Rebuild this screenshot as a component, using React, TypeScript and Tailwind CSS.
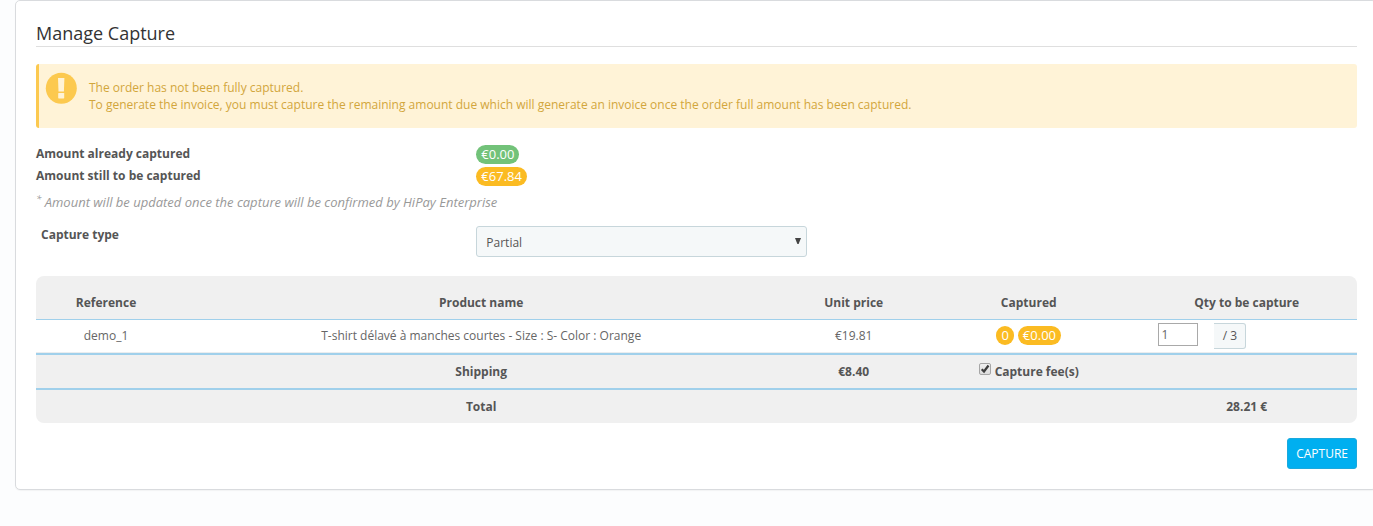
import { useState, type ReactNode } from "react";

function Badge({ tone, children }: { tone: "green" | "amber"; children: ReactNode }) {
  const color = tone === "green" ? "bg-[#72c279]" : "bg-[#fbbb22]";
  return (
    <span className={`block h-[19px] rounded-full px-[5px] text-[13px] leading-[19px] text-white ${color}`}>
      {children}
    </span>
  );
}

function AlertIcon() {
  return (
    <svg viewBox="0 0 32 32" className="h-8 w-8 shrink-0" aria-hidden="true">
      <circle cx="16.3" cy="16.3" r="15.5" fill="#fcc94f" />
      <path d="M13 6h6.4l-.5 13.6h-5.4z" fill="#fff3d7" />
      <rect x="13.2" y="21" width="6" height="5.4" rx=".6" fill="#fff3d7" />
    </svg>
  );
}

export default function App() {
  const [type, setType] = useState("partial");
  const [qty, setQty] = useState("1");
  const [fees, setFees] = useState(true);

  return (
    <div className="min-h-screen overflow-x-hidden bg-[#fcfdfe] pl-[15px] font-['Open_Sans','Noto_Sans',sans-serif] text-xs text-[#555]">
      <main className="-mr-1 rounded-[5px] border border-[#d9dbde] bg-white pt-5 pr-[19px] pb-5 pl-5 shadow-[0_1px_1px_rgba(0,0,0,0.04)]">
        <h1 className="border-b border-[#dfdfdf] text-lg leading-[25px] text-[#333]">Manage Capture</h1>

        <div
          role="alert"
          className="mt-[17px] flex h-16 rounded-[3px] border-l-[3px] border-[#fcc94f] bg-[#fff3d7] pt-2 pl-[6px] text-[#d2a63c]"
        >
          <AlertIcon />
          <p className="ml-3 pt-[7px] leading-[17px]">
            The order has not been fully captured.
            <br />
            To generate the invoice, you must capture the remaining amount due which will generate an invoice once the
            order full amount has been captured.
          </p>
        </div>

        <dl className="mt-[15px] grid grid-cols-[1fr_2fr] leading-[22px]">
          <dt className="font-bold">Amount already captured</dt>
          <dd className="flex h-[22px] items-center">
            <Badge tone="green">€0.00</Badge>
          </dd>
          <dt className="font-bold">Amount still to be captured</dt>
          <dd className="flex h-[22px] items-center">
            <Badge tone="amber">€67.84</Badge>
          </dd>
        </dl>
        <p className="mt-[7px] text-[13px] leading-[17px] text-[#999] italic">
          <sup>*</sup> Amount will be updated once the capture will be confirmed by HiPay Enterprise
        </p>

        <form onSubmit={(e) => e.preventDefault()}>
          <div className="mt-[15px] flex">
            <label htmlFor="capture-type" className="w-1/3 pl-[5px] leading-[17px] font-bold">
              Capture type
            </label>
            <div className="relative w-1/4">
              <select
                id="capture-type"
                value={type}
                onChange={(e) => setType(e.target.value)}
                className="block h-[31px] w-full appearance-none rounded-[3px] border border-[#c7d6db] bg-[#f5f8f9] pt-[2px] pl-[9px] text-xs text-[#555]"
              >
                <option value="partial">Partial</option>
                <option value="complete">Complete</option>
              </select>
              <svg
                viewBox="0 0 6 6"
                className="pointer-events-none absolute top-3 right-[6px] h-[6px] w-[6px]"
                aria-hidden="true"
              >
                <path d="M0 0h6L3.6 6H2.4z" fill="#444" />
              </svg>
            </div>
          </div>

          <table className="mt-[19px] w-full table-fixed border-separate border-spacing-0 overflow-hidden rounded-lg bg-[#f0f0f0] text-center leading-[17px]">
            <colgroup>
              <col className="w-[10.6%]" />
              <col className="w-[46.2%]" />
              <col className="w-[10.2%]" />
              <col className="w-[16.3%]" />
              <col className="w-[16.7%]" />
            </colgroup>
            <thead>
              <tr className="h-11 *:border-b *:border-[#a0d0eb] *:pt-[10px]">
                <th scope="col">Reference</th>
                <th scope="col">Product name</th>
                <th scope="col">Unit price</th>
                <th scope="col">Captured</th>
                <th scope="col">Qty to be capture</th>
              </tr>
            </thead>
            <tbody>
              <tr className="h-[33px] bg-white text-[#666] *:border-b *:border-[#eaedef] *:pb-[2px]">
                <td>demo_1</td>
                <td>T-shirt délavé à manches courtes - Size : S- Color : Orange</td>
                <td>€19.81</td>
                <td>
                  <div className="flex justify-center gap-1">
                    <Badge tone="amber">0</Badge>
                    <Badge tone="amber">€0.00</Badge>
                  </div>
                </td>
                <td>
                  <div className="flex items-start gap-4 pt-[2px] pl-[22px]">
                    <input
                      type="text"
                      aria-label="Quantity to capture"
                      value={qty}
                      onChange={(e) => setQty(e.target.value)}
                      className="h-[23px] w-10 border border-[#a9a9a9] bg-white px-[2px] text-xs text-[#666]"
                    />
                    <span className="h-[26px] w-8 rounded-r-[3px] border border-l-0 border-[#c7d6db] bg-[#f5f8f9] leading-6 text-[#555]">
                      / 3
                    </span>
                  </div>
                </td>
              </tr>
            </tbody>
            <tfoot className="font-bold">
              <tr className="h-[35px] *:border-t-2 *:border-[#a0d0eb]">
                <td />
                <td>Shipping</td>
                <td>€8.40</td>
                <td>
                  <label className="flex items-start justify-center gap-1">
                    <span className="relative block h-3 w-3">
                      <input
                        type="checkbox"
                        checked={fees}
                        onChange={(e) => setFees(e.target.checked)}
                        className="block h-3 w-3 appearance-none rounded-[2px] border border-[#a6a6a6] bg-linear-to-b from-[#f0f0f0] to-[#dcdcdc]"
                      />
                      {fees && (
                        <svg
                          viewBox="0 0 12 12"
                          className="pointer-events-none absolute inset-0 h-3 w-3"
                          aria-hidden="true"
                        >
                          <path d="M2.7 6.2l2.3 2.3 4.5-6" fill="none" stroke="#3d3d3d" strokeWidth="2.2" />
                        </svg>
                      )}
                    </span>
                    Capture fee(s)
                  </label>
                </td>
                <td />
              </tr>
              <tr className="h-[35px] *:border-t-2 *:border-[#a0d0eb]">
                <td />
                <td>Total</td>
                <td />
                <td />
                <td>28.21 €</td>
              </tr>
            </tfoot>
          </table>

          <div className="mt-[15px] flex justify-end">
            <button
              type="submit"
              className="h-[31px] rounded-[3px] border border-[#1aa9dd] bg-[#00aff0] px-2 text-xs text-white uppercase"
            >
              Capture
            </button>
          </div>
        </form>
      </main>
    </div>
  );
}
